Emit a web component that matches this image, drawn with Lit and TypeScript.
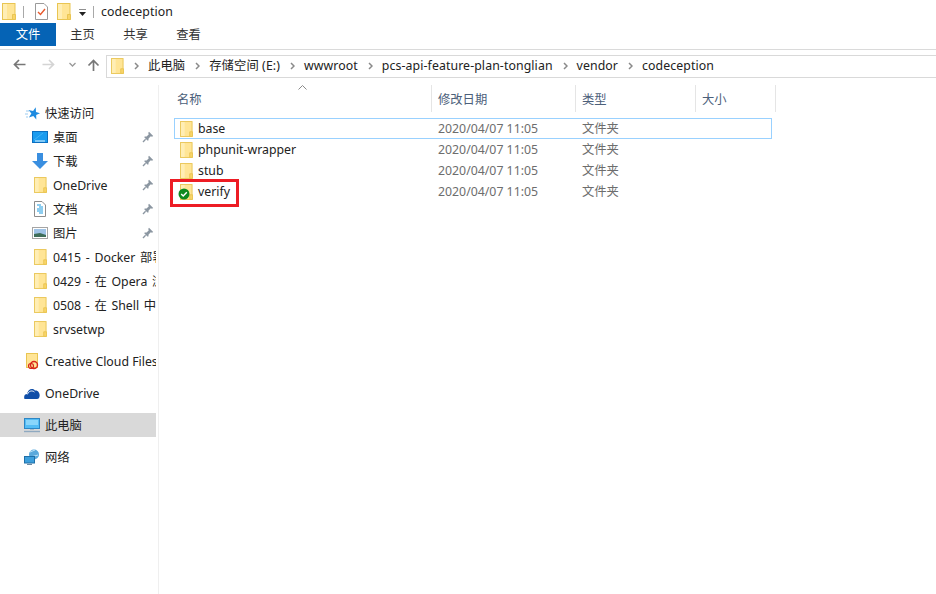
import { LitElement, html, css, svg } from "lit";
import { customElement } from "lit/decorators.js";

const folder = (w = 14, h = 17) => html`<svg class="ico" width=${w} height=${h} viewBox="0 0 14 17">
  <rect x=".5" y=".5" width="12.5" height="16" fill="#ffe596" stroke="#e9c552"/>
  <rect x="1" y="1" width="4" height="15" fill="#ffeeb5"/>
  <path d="M10.5 16.5V11.5H13.5V16.5Z" fill="#f9d468" stroke="#e9c552"/>
</svg>`;

const pin = html`<svg class="pin" width="12" height="12" viewBox="0 0 12 12">
  <path d="M7 .8 11.2 5 10 5.8 8.8 5.2 6.6 7.4 6.4 9.4 5.4 9.6 2.4 6.6 2.6 5.6 4.6 5.4 6.8 3.2 6.2 2Z" fill="#8b96a1"/>
  <path d="M3.6 8.2 1 11" stroke="#8b96a1" stroke-width="1.3" fill="none"/>
</svg>`;

const chev = html`<svg class="chev" width="5" height="8" viewBox="0 0 5 8"><path d="M1 1 4 4 1 7" fill="none" stroke="#8a8a8a" stroke-width="1.5"/></svg>`;

const icons: Record<string, unknown> = {
  star: svg`<path d="M11.7 2.2 12 6.9 16 8.2 12.2 9.9 12.3 14.6 9.3 11 4.9 12.6 7.4 8.6 4.5 5 9.1 6.1Z" fill="#1e8be0"/><path d="M2 6h3M1 9h3M2 12h2" stroke="#9ccbef"/>`,
  desk: svg`<rect x=".5" y="2.5" width="15" height="11" fill="#1b9cef" stroke="#0c6fc0"/><path d="M3 12H13" stroke="#e6f6ff"/><path d="M2 11 11 4" stroke="#4cb8f5" stroke-width=".8"/>`,
  down: svg`<path d="M5 0H11V8H16L8 16 0 8H5Z" fill="#3a8fe0"/>`,
  doc: svg`<path d="M2.5.5H10L13.5 4V15.5H2.5Z" fill="#fff" stroke="#8c8c8c"/><path d="M5 4h4M7 6h4M5 8h6M5 10h6M7 12h4" stroke="#1c9be0"/>`,
  pic: svg`<rect x=".5" y="2.5" width="15" height="11" fill="#fff" stroke="#a5a5a5"/><rect x="2" y="4" width="12" height="8" fill="#9fc3e6"/><path d="M2 9 8 8 14 10V12H2Z" fill="#3f6e5a"/>`,
  cloud: svg`<path d="M.5 14C-.6 11 1 9 3 9 4 4.5 8 2.5 11 5.5 14 5 16 8 15.6 11 15.4 13 14.6 14 13 14Z" fill="#0f4ea8"/><path d="M3.4 9.4C4.6 6 8 5 10.4 7" stroke="#fff" fill="none"/>`,
  pc: svg`<rect x=".5" y="1.5" width="15" height="10" fill="#54bdf5" stroke="#2d86c4"/><path d="M2 3h12v5H2Z" fill="#8ad6fb"/><path d="M0 14.5H16" stroke="#8fa9c0" stroke-width="1.4"/><path d="M6 12h4v1H6Z" fill="#a9bccb"/>`,
  net: svg`<circle cx="10" cy="5.5" r="5" fill="#5aa9dc"/><path d="M6 3 11 1M7 8 14 6" stroke="#bfe3f7"/><rect x=".5" y="7.5" width="10" height="6.5" fill="#3d9fdc" stroke="#1f6fa8"/><path d="M3 15.5H8" stroke="#6d8aa3" stroke-width="1.4"/>`,
};
const ic = (n: string) => html`<svg class="ico" width="16" height="16" viewBox="0 0 16 16">${icons[n]}</svg>`;

const quick: [unknown, string][] = [
  [ic("desk"), "桌面"],
  [ic("down"), "下载"],
  [folder(13, 16), "OneDrive"],
  [ic("doc"), "文档"],
  [ic("pic"), "图片"],
];
const recent = ["0415 - Docker 部署 PHP", "0429 - 在 Opera 浏览器", "0508 - 在 Shell 中执行", "srvsetwp"];
const crumbs = ["此电脑", "存储空间 (E:)", "wwwroot", "pcs-api-feature-plan-tonglian", "vendor", "codeception"];
const files = ["base", "phpunit-wrapper", "stub", "verify"];

@customElement("app-root")
export class AppRoot extends LitElement {
  static styles = css`
    :host {
      display: flex;
      flex-direction: column;
      width: 936px;
      height: 594px;
      overflow: hidden;
      background: #fff;
      color: #1a1a1a;
      font: 12.3px/16px "Noto Sans", "Noto Sans CJK SC", sans-serif;
    }
    svg { display: block; flex: none; }
    .title { height: 23px; display: flex; align-items: center; padding-left: 2px; }
    .tsep { width: 1px; height: 12px; background: #a8a8a8; }
    .titletext { margin-left: 7px; color: #222; letter-spacing: .1px; }
    .drop { margin: 2px 0 0 8px; }
    .tabs { height: 23px; display: flex; }
    .tab { display: flex; align-items: center; justify-content: center; width: 53px; color: #333; }
    .tab.active { width: 56px; background: #0563b5; color: #fff; }
    .ribbon-line { height: 3px; border-bottom: 1px solid #dadada; }
    .addr { height: 27px; display: flex; align-items: center; padding-top: 2px; box-sizing: border-box; }
    .nav { width: 106px; display: flex; align-items: center; flex: none; padding-left: 13px; box-sizing: border-box; }
    .box { flex: 1; height: 23px; margin-top: 3px; border: 1px solid #d9d9d9; border-right: 0; display: flex; align-items: center; padding-left: 4px; box-sizing: border-box; }
    .box .ico { margin-right: 10px; }
    .box .chev { margin-right: 9px; }
    .crumb { margin-right: 10px; color: #222; white-space: nowrap; letter-spacing: .1px; }
    .main { flex: 1; display: flex; min-height: 0; margin-top: 8px; }
    .side { width: 159px; flex: none; border-right: 1px solid #efefef; box-sizing: border-box; padding-top: 16px; overflow: hidden; }
    .row { height: 24px; width: 156px; display: flex; align-items: center; white-space: nowrap; overflow: hidden; box-sizing: border-box; position: relative; }
    .q { padding-left: 32px; }
    .q .label { margin-left: 5px; }
    .qf { padding-left: 34px; }
    .qf .label { margin-left: 6px; }
    .recent { word-spacing: 1.5px; }
    .top { padding-left: 24px; }
    .top .label { margin-left: 5px; }
    .gap { margin-top: 8px; }
    .sel { background: #d9d9d9; }
    .label { overflow: hidden; flex: 1; color: #222; padding-top: 2px; }
    .pin { position: absolute; left: 142px; top: 6px; }
    .content { flex: 1; min-width: 0; padding-left: 15px; }
    .hdr { height: 27px; display: grid; grid-template-columns: 258px 144px 120px 80px; position: relative; box-sizing: border-box; color: #4c607a; }
    .hdr div { border-right: 1px solid #e5e5e5; display: flex; align-items: center; padding: 3px 0 0 6px; box-sizing: border-box; }
    .hdr div:first-of-type { padding-left: 3px; }
    .sort { position: absolute; left: 124px; top: 0; }
    .list { margin-top: 6px; width: 598px; }
    .file { height: 21px; display: grid; grid-template-columns: 257px 144px 120px; align-items: center; box-sizing: border-box; position: relative; color: #6d6d6d; }
    .file .name { display: flex; align-items: center; padding-left: 6px; color: #222; }
    .file .name .ico { margin-right: 5px; }
    .file .d { padding-left: 7px; }
    .focus { box-shadow: inset 0 0 0 1px #99d1ff; }
    .badge { position: absolute; left: 4px; top: 4px; }
    .mark { position: absolute; left: -4px; top: -5px; width: 69px; height: 28px; border: 3px solid #ed1c24; box-sizing: border-box; }
    .fname { position: relative; }
  `;

  render() {
    return html`
      <div class="title">
        ${folder()}
        <span class="tsep" style="margin:0 11px 0 7px"></span>
        <svg width="13" height="17" viewBox="0 0 13 17" style="margin-right:9px"><path d="M.5.5H9L12.5 4V16.5H.5Z" fill="#fff" stroke="#9a9a9a"/><path d="M3 9 5.5 11.5 10 6" fill="none" stroke="#e8582c" stroke-width="1.4"/></svg>
        ${folder()}
        <svg class="drop" width="7" height="8" viewBox="0 0 7 8"><path d="M0 0H7" stroke="#222"/><path d="M0 3H7L3.5 7Z" fill="#222"/></svg>
        <span class="tsep" style="margin-left:7px"></span>
        <span class="titletext">codeception</span>
      </div>
      <div class="tabs">
        <div class="tab active">文件</div>
        <div class="tab">主页</div>
        <div class="tab">共享</div>
        <div class="tab">查看</div>
      </div>
      <div class="ribbon-line"></div>
      <div class="addr">
        <div class="nav">
          <svg width="13" height="11" viewBox="0 0 13 11"><path d="M12.5 5.5H2M6 1 1.5 5.5 6 10" fill="none" stroke="#777" stroke-width="1.7"/></svg>
          <svg width="13" height="11" viewBox="0 0 13 11" style="margin-left:16px"><path d="M.5 5.5H11M7 1 11.5 5.5 7 10" fill="none" stroke="#d4d4d4" stroke-width="1.7"/></svg>
          <svg width="7" height="5" viewBox="0 0 7 5" style="margin-left:14px"><path d="M.5 1 3.5 4 6.5 1" fill="none" stroke="#999" stroke-width="1.3"/></svg>
          <svg width="13" height="12" viewBox="0 0 13 12" style="margin-left:11px"><path d="M6.5 12V2M1.5 6.5 6.5 1.5 11.5 6.5" fill="none" stroke="#777" stroke-width="1.7"/></svg>
        </div>
        <div class="box">
          ${folder(13, 16)}
          ${chev}
          ${crumbs.map((c, i) => html`<span class="crumb">${c}</span>${i < crumbs.length - 1 ? chev : ""}`)}
        </div>
      </div>
      <div class="main">
        <div class="side">
          <div class="row top">${ic("star")}<span class="label">快速访问</span></div>
          ${quick.map(([i, t], n) => html`<div class="row ${n === 2 ? "qf" : "q"}">${i}<span class="label">${t}</span>${pin}</div>`)}
          ${recent.map((t) => html`<div class="row qf recent">${folder(13, 16)}<span class="label">${t}</span></div>`)}
          <div class="row top gap">
            <svg class="ico" width="16" height="17" viewBox="0 0 16 17"><rect x="2.5" y=".5" width="11" height="14" fill="#ffe596" stroke="#e9c552"/><circle cx="10" cy="12" r="3.5" fill="none" stroke="#d8261c" stroke-width="1.4"/><circle cx="7" cy="13" r="2.5" fill="none" stroke="#d8261c" stroke-width="1.2"/></svg>
            <span class="label">Creative Cloud Files</span>
          </div>
          <div class="row top gap">${ic("cloud")}<span class="label">OneDrive</span></div>
          <div class="row top gap sel">${ic("pc")}<span class="label">此电脑</span></div>
          <div class="row top gap">${ic("net")}<span class="label">网络</span></div>
        </div>
        <div class="content">
          <div class="hdr">
            <svg class="sort" width="9" height="5" viewBox="0 0 9 5"><path d="M.5 4.5 4.5.5 8.5 4.5" fill="none" stroke="#8a8a8a"/></svg>
            <div>名称</div><div>修改日期</div><div>类型</div><div>大小</div>
          </div>
          <div class="list">
            ${files.map((f, i) => html`
              <div class="file ${i === 0 ? "focus" : ""}">
                <div class="name fname">
                  ${folder(13, 16)}
                  ${f === "verify"
                    ? html`<svg class="badge" width="12" height="12" viewBox="0 0 12 12"><circle cx="6" cy="6" r="5.5" fill="#0c8a1f"/><path d="M3.2 6 5.2 8 8.8 4.2" fill="none" stroke="#fff" stroke-width="1.4"/></svg><span class="mark"></span>`
                    : ""}
                  ${f}
                </div>
                <span class="d">2020/04/07 11:05</span>
                <span class="d">文件夹</span>
              </div>`)}
          </div>
        </div>
      </div>
    `;
  }
}
